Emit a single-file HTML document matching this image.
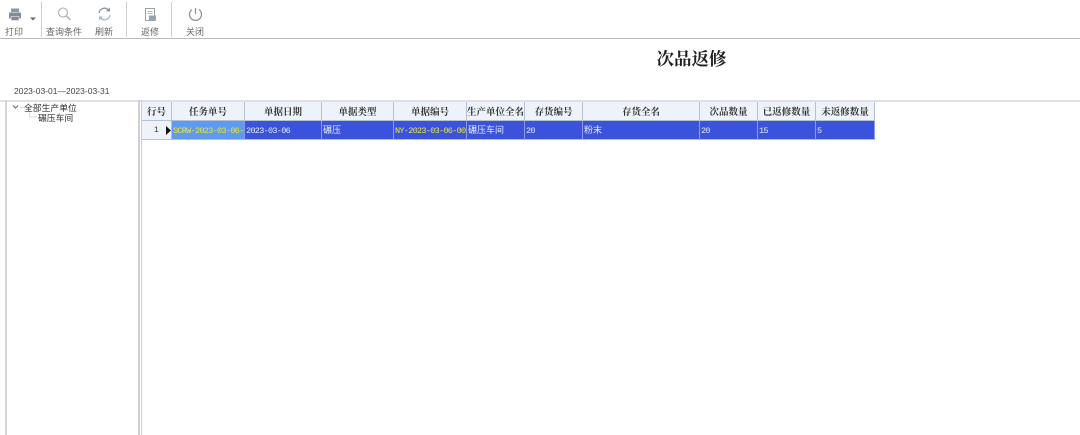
<!DOCTYPE html>
<html lang="zh"><head><meta charset="utf-8"><style>
html,body{margin:0;padding:0;background:#fff}
body{position:relative;width:1080px;height:435px;overflow:hidden;font-family:"Liberation Sans","Noto Sans CJK SC",sans-serif;color:#333}
div{position:absolute;box-sizing:border-box;white-space:nowrap}
svg{position:absolute;overflow:visible}
.tb{font-size:9px;line-height:12px;top:26px;color:#666;text-align:center}
.sep{top:2px;width:1px;height:35px;background:#d0d0d0}
.h{top:102px;height:19px;background:#eef3fb;border-right:1px solid #b4c0d4;border-bottom:1px solid #b4c0d4;font:bold 9.500px/18px "Noto Serif CJK SC","Noto Sans CJK SC",sans-serif;color:#333;text-align:center;overflow:hidden}
.c{top:121px;height:19px;background:#3b52dc;border-right:1px solid #8a9ae6;border-bottom:1px solid #b4c0d4;font:8.500px/21px "Liberation Mono","Noto Sans CJK SC",monospace;letter-spacing:-.7px;color:#e4e8ff;padding-left:1px;overflow:hidden}
.y{color:#e8e83a}
.m{font-family:"Liberation Sans","Noto Sans CJK SC",sans-serif;letter-spacing:0;line-height:19px}
</style></head><body>
<svg style="left:0;top:0" width="220" height="40" fill="none">
<path d="M11 8.500h8v3.500h-8z" fill="#8a96a0"/><path d="M9 12.500h12v6h-12z" fill="#7f8b95"/><path d="M11 16.500h8v4h-8z" fill="#7f8b95" stroke="#fff" stroke-width=".6"/>
<path d="M30 17.500h6l-3 3z" fill="#666"/>
<circle cx="63" cy="12.500" r="4.500" stroke="#a8b2ba" stroke-width="1.100"/><path d="M66.500 16l4 4" stroke="#a8b2ba" stroke-width="1.400"/>
<path d="M99 13a5.500 5.500 0 0 1 9.500-3" stroke="#8a96a0" stroke-width="1.300"/><path d="M110 7.500v4h-4z" fill="#8a96a0"/><path d="M110 15a5.500 5.500 0 0 1-9.500 3" stroke="#9dbbd0" stroke-width="1.300"/><path d="M99 20.500v-4h4z" fill="#9dbbd0"/>
<path d="M145.500 8.500h9v12h-9z" stroke="#98a2aa"/><path d="M147.500 11.500h5M147.500 13.500h5" stroke="#b0b8c0"/><path d="M149 15.500h7v5h-7z" fill="#98a2aa"/>
<path d="M192 9.500a6 6 0 1 0 7 0" stroke="#8a96a0" stroke-width="1.300"/><path d="M195.500 8v6" stroke="#8a96a0" stroke-width="1.300"/>
</svg>
<div class="tb" style="left:4px;width:20px">打印</div>
<div class="tb" style="left:45px;width:38px">查询条件</div>
<div class="tb" style="left:93px;width:22px">刷新</div>
<div class="tb" style="left:139px;width:22px">返修</div>
<div class="tb" style="left:184px;width:22px">关闭</div>
<div class="sep" style="left:41px"></div>
<div class="sep" style="left:126px"></div>
<div class="sep" style="left:171px"></div>
<div style="left:0;top:38px;width:1080px;height:1px;background:#bbb"></div>

<div style="left:651px;top:47px;width:81px;text-align:center;font:bold 17.500px/23px 'Noto Serif CJK SC','Noto Sans CJK SC',sans-serif;color:#222">次品返修</div>
<div style="left:14px;top:86px;font-size:8.500px;line-height:11px;color:#444">2023-03-01—2023-03-31</div>

<div style="left:0;top:100px;width:1080px;height:2px;background:#e0e0e3"></div>
<div style="left:5px;top:100px;width:2px;height:335px;background:#d6d6da"></div>
<div style="left:138px;top:100px;width:2px;height:335px;background:#d0d0d4"></div>
<div style="left:141px;top:100px;width:1px;height:335px;background:#d0d0d4"></div>

<svg style="left:0;top:96px" width="90" height="30" fill="none">
<path d="M13 9.500l2.500 2.500 2.500-2.500" stroke="#666"/>
<path d="M20.500 11.500h3M29.500 13v8h8" stroke="#bbb" stroke-dasharray="1 1"/>
</svg>
<div style="left:24px;top:103px;font-size:8.800px;line-height:11px;color:#333">全部生产单位</div>
<div style="left:38px;top:113px;font-size:8.800px;line-height:11px;color:#333">碾压车间</div>

<div class="h" style="left:142px;width:30px">行号</div>
<div class="h" style="left:172px;width:73px">任务单号</div>
<div class="h" style="left:245px;width:77px">单据日期</div>
<div class="h" style="left:322px;width:72px">单据类型</div>
<div class="h" style="left:394px;width:73px">单据编号</div>
<div class="h" style="left:467px;width:58px">生产单位全名</div>
<div class="h" style="left:525px;width:58px">存货编号</div>
<div class="h" style="left:583px;width:117px">存货全名</div>
<div class="h" style="left:700px;width:58px">次品数量</div>
<div class="h" style="left:758px;width:58px">已返修数量</div>
<div class="h" style="left:816px;width:59px">未返修数量</div>

<div class="h" style="left:142px;top:121px;width:30px;font:8px/20px 'Liberation Mono',monospace;text-align:left;padding-left:12px">1</div>
<svg style="left:165px;top:126px" width="7" height="9"><path d="M1 0l5 4.500-5 4.500z" fill="#111"/></svg>
<div class="c y" style="left:172px;width:73px;background:#5e9bf0">SCRW-2023-03-06-0001</div>
<div class="c" style="left:245px;width:77px">2023-03-06</div>
<div class="c m" style="left:322px;width:72px;font-size:9px">碾压</div>
<div class="c y" style="left:394px;width:73px">NY-2023-03-06-0001</div>
<div class="c m" style="left:467px;width:58px;font-size:9px">碾压车间</div>
<div class="c" style="left:525px;width:58px">20</div>
<div class="c m" style="left:583px;width:117px;font-size:9px">粉末</div>
<div class="c" style="left:700px;width:58px">20</div>
<div class="c" style="left:758px;width:58px">15</div>
<div class="c" style="left:816px;width:59px">5</div>
</body></html>
